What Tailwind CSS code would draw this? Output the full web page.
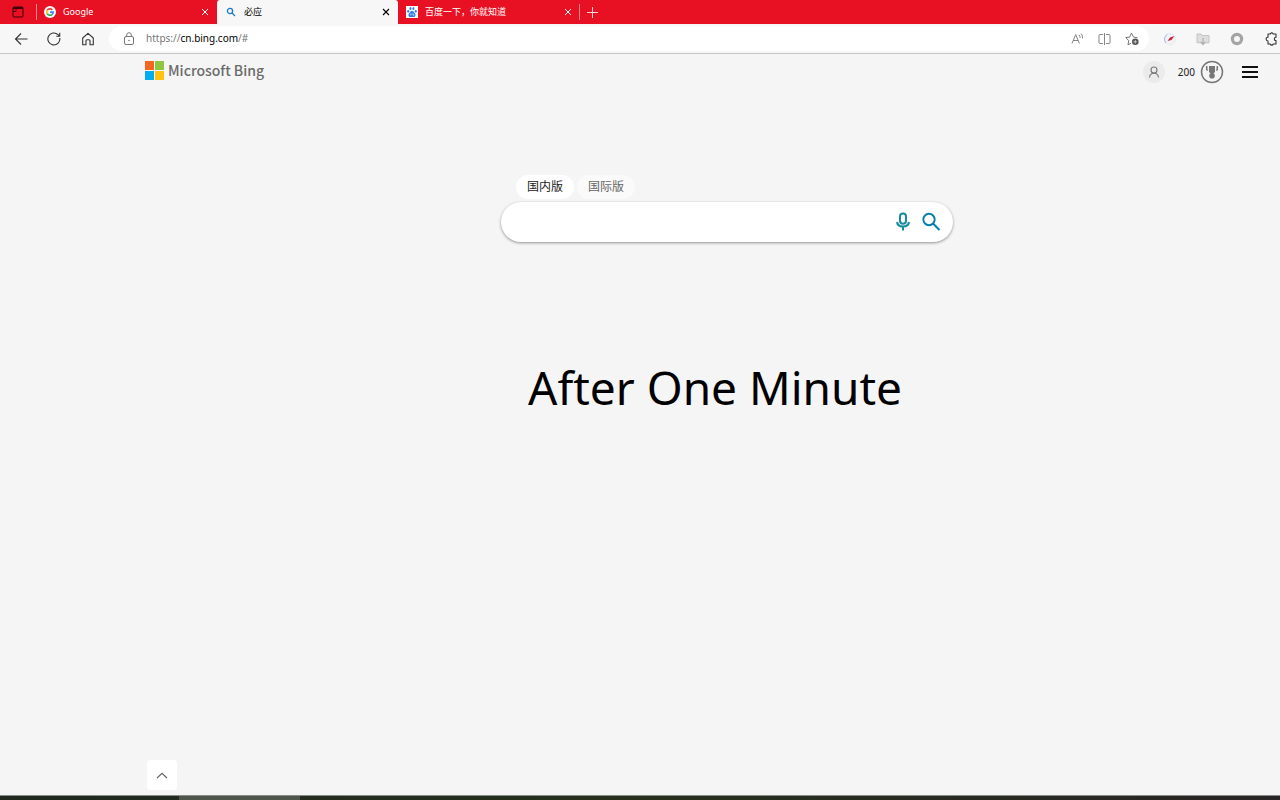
<!DOCTYPE html>
<html lang="zh-CN">
<head>
    <meta charset="UTF-8">
    <meta name="viewport" content="width=device-width, initial-scale=1.0">
    <title>必应</title>
    <script src="https://cdn.jsdelivr.net/npm/@tailwindcss/browser@4"></script>
</head>
<body class="h-screen flex flex-col overflow-hidden bg-[#f5f5f5] text-black font-['Noto_Sans','Noto_Sans_CJK_SC',sans-serif]">

    <!-- Tab strip -->
    <div class="flex h-6 shrink-0 items-center bg-[#e81123] text-[9px] text-white">
        <button class="flex w-9 justify-center" aria-label="Tab actions">
            <svg class="size-3" viewBox="0 0 12 12" fill="none" stroke="#3c0008"><rect x="1" y="1" width="10" height="10" rx="1"/><path d="M1 2h10" stroke-width="2"/><path d="M4 3v2.500H1" stroke-width=".8"/></svg>
        </button>
        <div class="flex h-full w-[181px] items-center pr-[6px]">
            <span class="mr-[7px] h-4 w-px bg-white/50"></span>
            <svg class="mr-[7px] size-3" viewBox="0 0 24 24" fill="none" stroke-width="3.4"><circle cx="12" cy="12" r="12" fill="#fff"/><path d="M16.6 7.6A6.5 6.5 0 0 0 6.3 8.8" stroke="#ea4335"/><path d="M6.3 8.8a6.5 6.5 0 0 0 0 6.4" stroke="#fbbc05"/><path d="M6.3 15.2a6.5 6.5 0 0 0 9.6 2" stroke="#34a853"/><path d="M15.9 17.2a6.5 6.5 0 0 0 2.5-5.1H12" stroke="#4285f4"/></svg>
            <span class="flex-1">Google</span>
            <button class="flex size-3 items-center justify-center" aria-label="Close Google">
                <svg class="size-2" viewBox="0 0 8 8" stroke="currentColor" stroke-width="1"><path d="M1 1l6 6M7 1L1 7"/></svg>
            </button>
        </div>
        <div class="flex h-full w-[181px] items-center rounded-t-[3px] bg-[#f7f7f7] pl-[9px] pr-[6px] text-black">
            <svg class="mr-[8px] size-[10px]" viewBox="0 0 10 10" fill="none" stroke="#1c7bd0" stroke-width="1.3"><circle cx="4" cy="4" r="2.6"/><path d="M6 6l3 3"/></svg>
            <span class="flex-1">必应</span>
            <button class="flex size-3 items-center justify-center" aria-label="Close 必应">
                <svg class="size-2" viewBox="0 0 8 8" stroke="currentColor" stroke-width="1.1"><path d="M1 1l6 6M7 1L1 7"/></svg>
            </button>
        </div>
        <div class="flex h-full w-[181px] items-center pl-[8px] pr-[5px]">
            <svg class="mr-[7px] size-3" viewBox="0 0 12 12"><path fill="#fff" d="M0 0h12v12H0z"/><g fill="#2f7de9"><ellipse cx="2.2" cy="5.3" rx="1" ry="1.4"/><ellipse cx="4.4" cy="2.6" rx="1" ry="1.5"/><ellipse cx="7.4" cy="2.6" rx="1" ry="1.5"/><ellipse cx="9.8" cy="5.3" rx="1" ry="1.4"/><path d="M6 4.8c1.2 0 1.6 1.3 2.6 2.2 1.4 1.2 1.3 4-.8 4H4.2c-2.1 0-2.2-2.8-.8-4 1-.9 1.4-2.200 2.600-2.200z"/></g><path d="M4.900 7.500v1.800M7 7.500v1.600h1.200" stroke="#fff" stroke-width=".7" fill="none"/></svg>
            <span class="flex-1">百度一下，你就知道</span>
            <button class="flex size-3 items-center justify-center" aria-label="Close 百度">
                <svg class="size-2" viewBox="0 0 8 8" stroke="currentColor" stroke-width="1"><path d="M1 1l6 6M7 1L1 7"/></svg>
            </button>
        </div>
        <span class="h-4 w-px bg-white/50"></span>
        <button class="ml-[6px]" aria-label="New tab">
            <svg class="size-3" viewBox="0 0 12 12" stroke="#ffd5d8" stroke-width="1"><path d="M6.500 1v11M1 6.500h11"/></svg>
        </button>
    </div>

    <!-- Toolbar -->
    <div class="flex h-[30px] shrink-0 items-center border-b border-[#c6c8c8] bg-[#f7f7f7] pl-[14px] text-[#333]">
        <button class="mr-[19px]" aria-label="Back">
            <svg class="size-[14px]" viewBox="0 0 14 14" fill="none" stroke="currentColor" stroke-width="1.1"><path d="M13.500 7H1.500M7 1.500L1.500 7 7 12.500"/></svg>
        </button>
        <button class="mr-[20px]" aria-label="Refresh">
            <svg class="size-[14px]" viewBox="0 0 14 14" fill="none" stroke="currentColor" stroke-width="1.1"><path d="M12.800 6A6 6 0 1 1 11 2.600L12.500 4M12.700.8V4.200H9.300"/></svg>
        </button>
        <button class="mr-[14px]" aria-label="Home">
            <svg class="size-[14px]" viewBox="0 0 14 14" fill="none" stroke="currentColor" stroke-width="1.1" stroke-linejoin="round"><path d="M1.700 6L7 1.300 12.300 6v6.700H9V8.800a1 1 0 0 0-1-1H6a1 1 0 0 0-1 1v3.900H1.700z"/></svg>
        </button>
        <div class="flex h-[25px] min-w-0 flex-1 items-center rounded-full bg-white pl-[15px] pr-[10px] text-[#777]">
            <svg class="mr-[12px] h-[14px] w-[10px] shrink-0" viewBox="0 0 10 14" fill="none" stroke="currentColor"><rect x=".5" y="4.500" width="9" height="8" rx="1.500"/><path d="M2.700 4.500V3a2.300 2.300 0 0 1 4.600 0v1.500"/><circle cx="5" cy="8.500" r=".4"/></svg>
            <a href="#" class="flex-1 text-[10px]">https://<span class="text-black">cn.bing.com</span>/#</a>
            <button class="mr-[14px]" aria-label="Read aloud">
                <svg class="h-[12px] w-[13px]" viewBox="0 0 13 12" fill="none" stroke="currentColor" stroke-width=".9"><path d="M1 10.500L4.700 1.500l3.700 9M2.300 7.500h4.800M8 1.800q1.300 1.200 1 3M10 .6q2 2 1.500 4.800"/></svg>
            </button>
            <button class="mr-[14px]" aria-label="Split screen">
                <svg class="h-[14px] w-[13px]" viewBox="0 0 13 14" fill="none" stroke="currentColor" stroke-width=".9"><path d="M5 2.500H2a1 1 0 0 0-1 1v7a1 1 0 0 0 1 1h3M8 2.500h3a1 1 0 0 1 1 1v7a1 1 0 0 1-1 1H8M6.500 1v12"/></svg>
            </button>
            <button aria-label="Add to favorites">
                <svg class="size-[14px]" viewBox="0 0 14 14" fill="none" stroke="currentColor"><path d="M6 11.200l-3 1.600.7-4.100L.8 5.600l3.700-.5L6.500 1.200l2 3.900 4 .5" stroke-linejoin="round"/><circle cx="10.300" cy="9.800" r="3.300" fill="#555" stroke="none"/><path d="M8.500 9.800h3.600M10.300 8v3.600" stroke="#fff" stroke-width=".6"/></svg>
            </button>
        </div>
        <button class="ml-[14px]" aria-label="Speed extension">
            <svg class="size-[14px]" viewBox="0 0 14 14" fill="none"><circle cx="7" cy="7" r="5.500" fill="#f3f3f7" stroke="#e8e8ee"/><path d="M4.500 2.300A5.500 5.500 0 0 0 3 11" stroke="#a3b8e4"/><path d="M4.500 9L7 5.500 11.500 4 8.500 8z" fill="#c8283a"/></svg>
        </button>
        <button class="ml-[19px]" aria-label="Downloads extension">
            <svg class="size-[14px]" viewBox="0 0 14 14" fill="none"><path d="M1 2h4l1 1.500h7v7.300H1z" fill="#dedede" stroke="#c4c4c4"/><path d="M7 6v6M4.800 10L7 12.500 9.200 10" stroke="#b0b0b0" stroke-width="1.200"/></svg>
        </button>
        <button class="ml-[20px]" aria-label="Ring extension">
            <svg class="size-[14px]" viewBox="0 0 14 14" fill="none"><circle cx="7" cy="7" r="4.600" stroke="#a4a4a4" stroke-width="3.200"/></svg>
        </button>
        <button class="ml-[20px]" aria-label="Extensions">
            <svg class="h-[14px] w-[16px]" viewBox="0 0 16 14" fill="none" stroke="currentColor" stroke-width="1.1" stroke-linejoin="round"><path d="M4 2h2.300a1.500 1.500 0 0 1 2.900 0H12v3.200a1.700 1.700 0 0 0 0 3.400V12H9.200a1.500 1.500 0 0 1-2.900 0H4V9a1.900 1.900 0 1 1 0-3.800z"/></svg>
        </button>
    </div>

    <!-- Page header -->
    <header class="flex h-9 shrink-0 items-center pl-[145px] pr-[22px]">
        <a href="#" class="flex items-center gap-1 pb-[3px]">
            <svg class="size-[19px]" viewBox="0 0 19 19"><path fill="#f26522" d="M0 0h9v9H0z"/><path fill="#8dc63f" d="M10 0h9v9h-9z"/><path fill="#00aeef" d="M0 10h9v9H0z"/><path fill="#ffc20e" d="M10 10h9v9h-9z"/></svg>
            <span class="font-['Noto_Sans_CJK_SC',sans-serif] text-[14px] leading-[19px] font-medium text-[#6b6b6b]">Microsoft Bing</span>
        </a>
        <div class="ml-auto flex items-center">
            <button class="flex size-[22px] items-center justify-center rounded-full bg-[#ebebeb] text-[#777]" aria-label="Sign in">
                <svg class="size-3" viewBox="0 0 12 12" fill="none" stroke="currentColor" stroke-width="1.1"><circle cx="6" cy="4" r="3"/><path d="M1.500 11.500C1.700 9 3.300 7.300 6 7.300s4.300 1.700 4.500 4.200"/></svg>
            </button>
            <a href="#" class="ml-[13px] flex items-center gap-[5px] text-[10px] text-[#222]">
                <span>200</span>
                <svg class="size-6" viewBox="0 0 24 24" fill="none"><circle cx="12" cy="12" r="10.500" stroke="#777" stroke-width="1.500"/><path d="M9 6h6v6l-3 3-3-3z" fill="#777"/><circle cx="12" cy="15.800" r="2.800" fill="#777"/><path d="M6.700 6v3.500l1 1M17.300 6v3.500l-1 1" stroke="#777" stroke-width="1.500"/></svg>
            </a>
            <button class="ml-[18px]" aria-label="Menu">
                <svg class="h-3 w-4" viewBox="0 0 16 12" stroke="#111" stroke-width="2"><path d="M0 1h16M0 6h16M0 11h16"/></svg>
            </button>
        </div>
    </header>

    <!-- Search -->
    <main class="flex flex-1 flex-col items-center pl-[174px] pt-[85px]">
        <div class="w-full max-w-[452px]">
            <div class="flex gap-[3px] pl-[15px] text-[12px]">
                <button class="h-6 rounded-full bg-white px-[11px] text-[#222]">国内版</button>
                <button class="h-6 rounded-full bg-[#fafafa] px-[11px] text-[#666]">国际版</button>
            </div>
            <form class="mt-[3px] flex h-10 items-center rounded-full bg-white pl-5 pr-[12px] text-[#007daa] shadow-[0_1px_3px_rgba(0,0,0,0.4)]">
                <input type="search" aria-label="搜索" class="min-w-0 flex-1 bg-transparent text-base text-black outline-none">
                <button type="button" aria-label="语音搜索">
                    <svg class="h-[20px] w-[14px]" viewBox="0 0 14 20" fill="none" stroke="#168a9f" stroke-width="2"><rect x="4" y="1.500" width="6" height="10.200" rx="3"/><path d="M1 10c.4 2.900 2.700 4.500 6 4.500s5.600-1.600 6-4.500M7 14.500v4"/></svg>
                </button>
                <button type="submit" class="ml-[11px]" aria-label="搜索">
                    <svg class="size-[20px]" viewBox="0 0 20 20" fill="none" stroke="currentColor" stroke-width="1.900"><circle cx="8" cy="7.500" r="5.700"/><path d="M12 11.500l6.500 6.500"/></svg>
                </button>
            </form>
            <h1 class="mt-[113px] pl-[27px] text-[46px] leading-[64px] whitespace-nowrap">After One Minute</h1>
        </div>
    </main>

    <div class="shrink-0 pb-[5px] pl-[147px]">
        <button class="flex size-[30px] items-center justify-center rounded-[4px] bg-white" aria-label="Scroll up">
            <svg class="h-[7px] w-3" viewBox="0 0 12 7" fill="none" stroke="#666" stroke-width="1.200"><path d="M1 6l5-4.700L11 6"/></svg>
        </button>
    </div>

    <!-- Taskbar -->
    <div class="flex h-[5px] shrink-0 border-t border-[#858b85] bg-linear-to-r from-[#20281f] via-[#26301c] to-[#292425]">
        <div class="ml-[179px] w-[121px] bg-[#4f554a]"></div>
    </div>
</body>
</html>
